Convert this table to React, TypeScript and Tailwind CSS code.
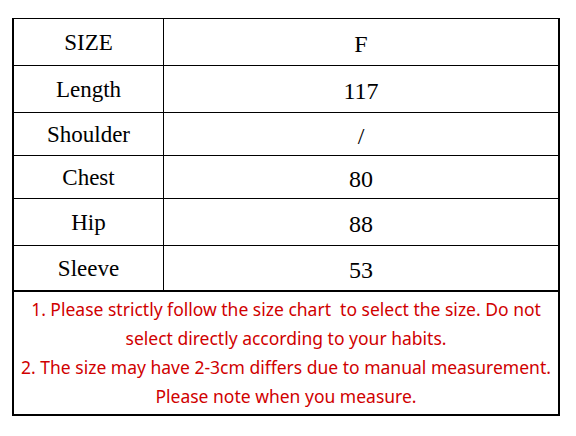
import React from "react";

const rows = [
  { label: "SIZE", value: "F", h: "h-[47px]" },
  { label: "Length", value: "117", h: "h-[47px]" },
  { label: "Shoulder", value: "/", h: "h-[43px]" },
  { label: "Chest", value: "80", h: "h-[43px]" },
  { label: "Hip", value: "88", h: "h-[47px]" },
  { label: "Sleeve", value: "53", h: "h-[46px]" },
];

export default function App() {
  return (
    <div className="w-[576px] h-[436px] bg-white pt-[18px] pl-[12px]">
      <div className="w-[548px] border-t border-l-2 border-r-2 border-b-2 border-black">
        {rows.map((r, i) => (
          <div
            key={r.label}
            className={`flex ${r.h} border-black ${i === rows.length - 1 ? "border-b-2" : "border-b"}`}
          >
            <div className="w-[150px] border-r border-black flex items-center justify-center pt-[3px] text-[23px] text-black font-['Liberation_Serif',serif]">
              {r.label}
            </div>
            <div className="flex-1 flex items-center justify-center pt-[3px] text-[24px] text-black font-['Liberation_Serif',serif]">
              {r.value}
            </div>
          </div>
        ))}

        {/* notes */}
        <div className="h-[122px] flex flex-col items-center justify-center text-[17.5px] leading-[29px] text-[#d00000] font-['Noto_Sans',sans-serif] whitespace-pre">
          <div>1. Please strictly follow the size chart  to select the size. Do not</div>
          <div>select directly according to your habits.</div>
          <div>2. The size may have 2-3cm differs due to manual measurement.</div>
          <div>Please note when you measure.</div>
        </div>
      </div>
    </div>
  );
}
